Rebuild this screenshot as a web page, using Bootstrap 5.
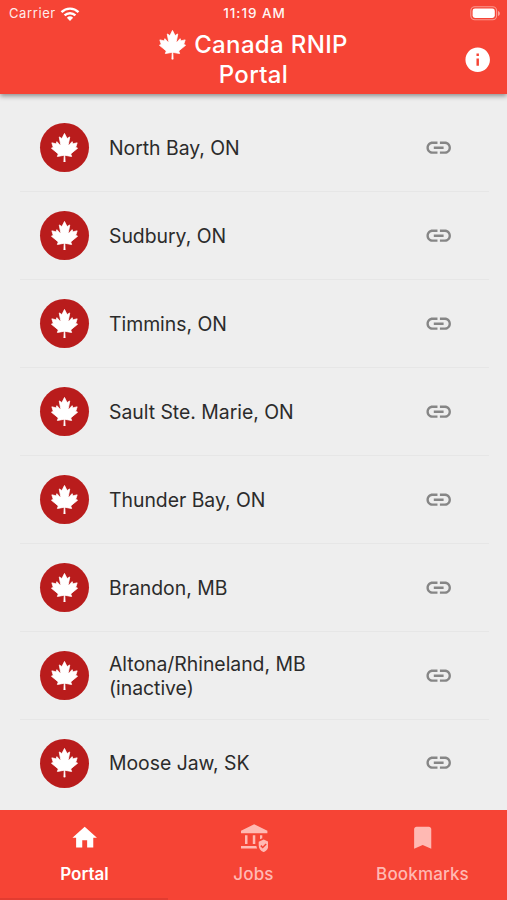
<!DOCTYPE html>
<html lang="en">
<head>
<meta charset="utf-8">
<meta name="viewport" content="width=device-width, initial-scale=1">
<title>Canada RNIP Portal</title>
<link href="https://cdn.jsdelivr.net/npm/bootstrap@5.3.0/dist/css/bootstrap.min.css" rel="stylesheet">
<style>
body{font-family:Inter,"Liberation Sans",sans-serif;background:#eee;height:900px;overflow:hidden}
svg{display:block;fill:currentColor;flex:none}
.app-red{background:#f64435;color:#fff}
.top-bar{height:94px;box-shadow:0 2px 5px rgba(0,0,0,.42);z-index:2}
.status-bar{height:27px;font-size:13px;line-height:27px;padding:0 7px 0 9px}
.carrier{letter-spacing:.6px;opacity:.9}
.clock{font-size:13.5px;font-weight:500;letter-spacing:.95px;opacity:.95}
.title-row{height:67px;padding:3px 15px 0}
.app-title{font-size:24px;line-height:29.5px;font-weight:500;letter-spacing:.35px;width:190px;margin:0}
.title-leaf{width:27px;height:29.6px;margin-right:8px}
.info-icon{margin-top:15px}
.places{padding:10px 18px 0 20px;height:715px;overflow:hidden}
.place{height:88px;padding:0 36px 0 20px;background:transparent;border:0;border-bottom:2px solid #e6e6e6;color:#2b2b2b}
.place:last-child{padding-bottom:2px}
.disc{width:49px;height:49px;background:#b91c1c;color:#fff}
.disc svg{width:27px;height:29.5px}
.place-name{font-size:19.4px;line-height:23.5px;letter-spacing:-.02px;margin-left:20px;width:240px;padding-top:2px}
.link-icon{color:#868686}
.tab-bar{height:90px}
.tab-bar::after{content:"";position:absolute;left:0;bottom:0;width:168px;height:2px;background:#e23c30}
.tab-item{color:#ffb9b3;font-size:17px;font-weight:500;letter-spacing:.15px;line-height:20px;padding:13px 0 0!important}
.tab-item:hover{color:#ffb9b3}
.tab-item.active{color:#fff;font-weight:600;letter-spacing:0}
.tab-item svg{margin-bottom:12px}
</style>
<script src="https://cdn.jsdelivr.net/npm/bootstrap@5.3.0/dist/js/bootstrap.bundle.min.js"></script>
</head>
<body class="d-flex flex-column">
<svg width="0" height="0" class="d-none">
<symbol id="leaf" viewBox="-1920 -2060 3840 4120" preserveAspectRatio="none"><path stroke="currentColor" stroke-width="110" stroke-linejoin="round" d="m-90 2030 45-863a95 95 0 0 0-111-98l-859 151 116-320a65 65 0 0 0-20-73l-941-762 212-99a65 65 0 0 0 34-79l-186-572 542 115a65 65 0 0 0 73-38l105-247 423 454a65 65 0 0 0 111-57l-204-1052 327 189a65 65 0 0 0 91-27l332-652 332 652a65 65 0 0 0 91 27l327-189-204 1052a65 65 0 0 0 111 57l423-454 105 247a65 65 0 0 0 73 38l542-115-186 572a65 65 0 0 0 34 79l212 99-941 762a65 65 0 0 0-20 73l116 320-859-151a95 95 0 0 0-111 98l45 863z"/></symbol>
<symbol id="chain" viewBox="0 0 24 24"><path d="M3.9 12c0-1.71 1.39-3.1 3.1-3.1h4V7H7c-2.76 0-5 2.24-5 5s2.24 5 5 5h4v-1.9H7c-1.71 0-3.1-1.39-3.1-3.1zM8 13h8v-2H8v2zm9-6h-4v1.9h4c1.71 0 3.1 1.39 3.1 3.1s-1.39 3.1-3.1 3.1h-4V17h4c2.76 0 5-2.24 5-5s-2.24-5-5-5z"/></symbol>
</svg>

<header class="top-bar app-red position-relative">
  <div class="status-bar row g-0 align-items-center">
    <div class="col d-flex align-items-center"><span class="carrier">Carrier</span>
      <svg class="ms-1" width="20" height="14" viewBox="0 0 20 14"><g fill="none" stroke="currentColor" stroke-width="2.4"><path d="M1.5 5.1a12.2 12.2 0 0 1 17 0"/><path d="M4.6 8.4a7.7 7.7 0 0 1 10.8 0"/></g><path d="M10 13.9 6.9 10.7a4.5 4.5 0 0 1 6.2 0z"/></svg>
    </div>
    <div class="col-auto clock">11:19 AM</div>
    <div class="col d-flex justify-content-end">
      <svg width="30" height="15" viewBox="0 0 30 15"><rect x=".8" y=".8" width="25.8" height="13" rx="4" fill="none" stroke="#fff" stroke-opacity=".45" stroke-width="1.1"/><rect x="2.6" y="2.6" width="22.2" height="9.4" rx="2.4"/><path d="M28 5v5c1.5-.7 1.9-1.6 1.9-2.5S29.5 5.7 28 5z" opacity=".5"/></svg>
    </div>
  </div>
  <div class="title-row row g-0">
    <div class="col"></div>
    <h1 class="col-auto app-title text-center text-nowrap"><span class="d-flex justify-content-center"><svg class="title-leaf"><use href="#leaf"/></svg>Canada RNIP</span>Portal</h1>
    <div class="col d-flex justify-content-end"><svg class="info-icon" width="29.4" height="29.4" viewBox="0 0 24 24"><path d="M12 2C6.48 2 2 6.48 2 12s4.48 10 10 10 10-4.48 10-10S17.52 2 12 2zm1 15h-2v-6h2v6zm0-8h-2V7h2v2z"/></svg></div>
  </div>
</header>

<main class="places list-group list-group-flush" id="places"></main>

<nav class="tab-bar app-red nav nav-justified mt-auto position-relative">
  <a class="nav-link tab-item active d-flex flex-column align-items-center"><svg width="29.4" height="29.4" viewBox="0 0 24 24"><path d="M10 20v-6h4v6h5v-8h3L12 3 2 12h3v8z"/></svg>Portal</a>
  <a class="nav-link tab-item d-flex flex-column align-items-center"><svg width="29.4" height="29.4" viewBox="-1 0 29.4 29.4"><path d="M1 7.8 14.2 1.3l13.2 6.5v2.4H1zM5 12.3h2.5v8.6H5zM12.8 12.3h2.5v8.6h-2.5zM20 12.3h2.3v2.9L20 16.2zM1 23h15.3c.2.9.5 1.7.9 2.4H1z"/><path fill-rule="evenodd" d="m23.7 16.5 4.7 2.3v3.5c0 3.2-1.900 5.9-4.700 6.800-2.900-.9-5-3.600-5-6.800v-3.500zm-1 9.100 4-4-1.100-1.100-2.900 2.900-1.300-1.300-1.100 1.100z"/></svg>Jobs</a>
  <a class="nav-link tab-item d-flex flex-column align-items-center"><svg width="29.4" height="29.4" viewBox="0 0 24 24"><path d="M17 3H7c-1.1 0-1.99.9-1.99 2L5 21l7-3 7 3V5c0-1.1-.9-2-2-2z"/></svg>Bookmarks</a>
</nav>

<script>
const places = ["North Bay, ON","Sudbury, ON","Timmins, ON","Sault Ste. Marie, ON","Thunder Bay, ON","Brandon, MB","Altona/Rhineland, MB (inactive)","Moose Jaw, SK"];
document.getElementById("places").innerHTML = places.map(name => `
  <div class="place list-group-item d-flex align-items-center flex-shrink-0">
    <span class="disc rounded-circle d-flex align-items-center justify-content-center flex-shrink-0"><svg><use href="#leaf"/></svg></span>
    <span class="place-name">${name}</span>
    <svg class="link-icon ms-auto" width="29.4" height="29.4"><use href="#chain"/></svg>
  </div>`).join("");
</script>
</body>
</html>
